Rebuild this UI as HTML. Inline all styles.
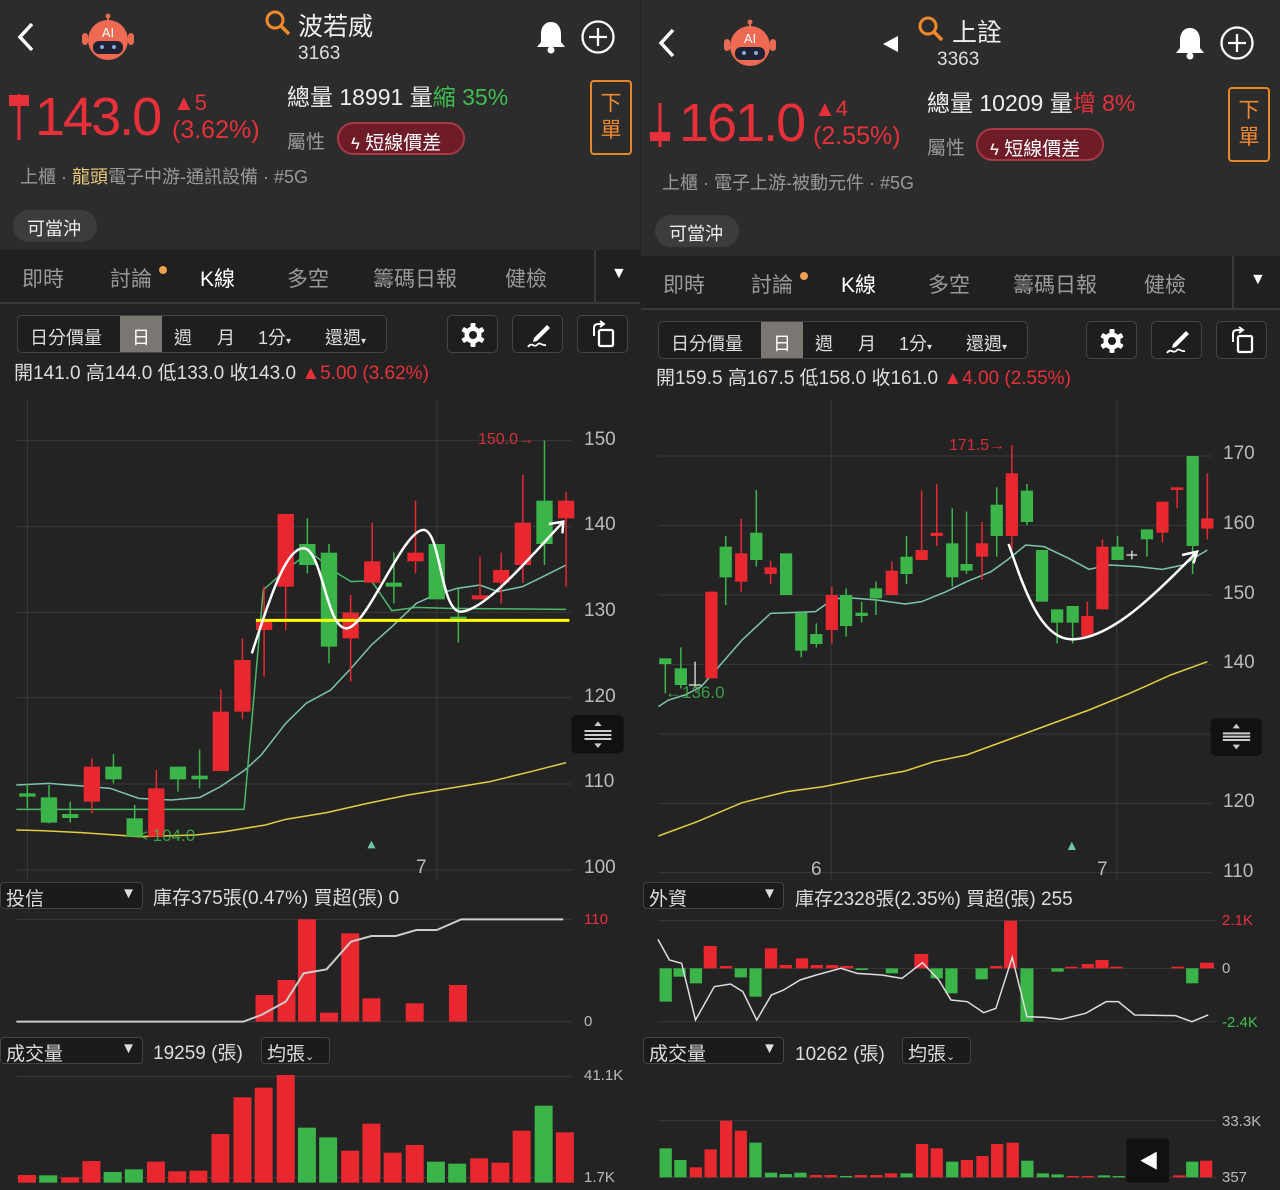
<!DOCTYPE html>
<html><head><meta charset="utf-8">
<style>
*{margin:0;padding:0;box-sizing:border-box}
body{width:1280px;height:1190px;background:#232323;position:relative;overflow:hidden;font-family:"Liberation Sans","Noto Sans CJK TC",sans-serif;color:#ddd}
.a{position:absolute;white-space:nowrap}
.p{position:absolute;top:0;width:640px;height:390px}
.hdr{position:absolute;left:0;top:0;width:640px;height:250px;background:#2c2c2c}
.tabs{position:absolute;left:0;top:250px;width:640px;height:54px;background:#202020;border-bottom:2px solid #3a3a3a}
.tabs span{position:absolute;top:13px;font-size:21px;color:#9a9a9a}
.seg{position:absolute;left:17px;top:315px;width:370px;height:38px;border:1px solid #444;border-radius:5px;background:#1e1e1e}
.seg span{position:absolute;top:8px;font-size:18px;color:#ddd}
.btn{position:absolute;top:315px;width:51px;height:38px;border:1px solid #444;border-radius:5px;background:#1e1e1e}
.red{color:#e8303a}.grn{color:#3fbf4f}
.ax{position:absolute;font-size:19px;color:#bbb}
.dd{position:absolute;height:27px;border:1px solid #444;border-radius:4px;background:#1b1b1b;font-size:19px;color:#ddd;padding:1px 5px}
</style></head><body>

<!-- LEFT HEADER -->
<div class="p" style="left:0">
<div class="hdr"></div>
<svg class="a" style="left:12px;top:20px" width="26" height="34"><path d="M20 4 L8 17 L20 30" stroke="#fff" stroke-width="3.5" fill="none"/></svg>
<svg class="a" style="left:80px;top:13px" width="56" height="48" viewBox="0 0 56 48"><line x1="28" y1="2" x2="28" y2="10" stroke="#e86a50" stroke-width="2"/><circle cx="28" cy="3" r="2.5" fill="#e86a50"/><rect x="2" y="20" width="6" height="12" rx="3" fill="#e86a50"/><rect x="48" y="20" width="6" height="12" rx="3" fill="#e86a50"/><circle cx="28" cy="27" r="20" fill="#ee6a52"/><rect x="13" y="28" width="30" height="13" rx="6" fill="#1f2233"/><circle cx="22" cy="34" r="2" fill="#8ad"/><circle cx="34" cy="34" r="2" fill="#8ad"/><text x="28" y="24" font-size="13" fill="#fff" text-anchor="middle" font-family="Liberation Sans">AI</text></svg>
<svg class="a" style="left:264px;top:9px" width="28" height="28"><circle cx="11" cy="11" r="8" stroke="#f0892a" stroke-width="3" fill="none"/><line x1="17" y1="17" x2="25" y2="25" stroke="#f0892a" stroke-width="3.5"/></svg>
<div class="a" style="left:298px;top:7px;font-size:25px;color:#eee">波若威</div>
<div class="a" style="left:298px;top:43px;font-size:19px;color:#ddd">3163</div>
<svg class="a" style="left:535px;top:20px" width="32" height="34" viewBox="0 0 32 34"><path d="M16 2 C9 2 6 8 6 14 L6 22 L2 27 L30 27 L26 22 L26 14 C26 8 23 2 16 2Z" fill="#fff"/><circle cx="16" cy="30" r="3.5" fill="#fff"/></svg>
<svg class="a" style="left:580px;top:19px" width="36" height="36"><circle cx="18" cy="18" r="15.5" stroke="#fff" stroke-width="2.3" fill="none"/><path d="M18 9V27M9 18H27" stroke="#fff" stroke-width="2.3"/></svg>
<svg class="a" style="left:8px;top:92px" width="24" height="50"><line x1="11" y1="2" x2="11" y2="48" stroke="#e8303a" stroke-width="3"/><rect x="1" y="3" width="20" height="11" fill="#e8303a"/></svg>
<div class="a red" style="left:35px;top:86px;font-size:54px;letter-spacing:-2px">143.0</div>
<div class="a red" style="left:173px;top:90px;font-size:22px">▲5</div>
<div class="a red" style="left:172px;top:116px;font-size:25px">(3.62%)</div>
<div class="a" style="left:287px;top:78px;font-size:23px;color:#eee">總量 18991 量<span class="grn">縮 35%</span></div>
<div class="a" style="left:287px;top:127px;font-size:19px;color:#999">屬性</div>
<div class="a" style="left:337px;top:122px;width:128px;height:33px;border:2px solid #a83a48;background:#6e1c28;border-radius:17px;font-size:19px;color:#fff;padding:4px 0 0 12px"><span style="font-size:17px">ϟ</span> 短線價差</div>
<div class="a" style="left:590px;top:80px;width:42px;height:75px;border:2px solid #e8862a;border-radius:4px;color:#f08a30;font-size:21px;line-height:27px;text-align:center;padding-top:8px;white-space:normal">下<br>單</div>
<div class="a" style="left:20px;top:163px;font-size:18px;color:#999">上櫃 · <span style="color:#e8c77a">龍頭</span>電子中游-通訊設備 · #5G</div>
<div class="a" style="left:13px;top:210px;width:84px;height:32px;border-radius:16px;background:#3c3c3c;font-size:18px;color:#eee;padding:5px 0 0 14px">可當沖</div>
<div class="tabs"><span style="left:22px">即時</span><span style="left:110px">討論</span><i class="a" style="left:159px;top:16px;width:8px;height:8px;border-radius:4px;background:#f0a050"></i><span style="left:200px;color:#fff">K線</span><span style="left:287px">多空</span><span style="left:373px">籌碼日報</span><span style="left:505px">健檢</span><i class="a" style="left:594px;top:0;width:2px;height:54px;background:#3a3a3a"></i><span style="left:611px;top:15px;font-size:16px;color:#fff">▼</span></div>
<div class="seg"><i class="a" style="left:102px;top:0;width:42px;height:36px;background:#7a7672"></i><span style="left:12px">日分價量</span><span style="left:114px;color:#fff">日</span><span style="left:156px">週</span><span style="left:199px">月</span><span style="left:240px">1分<small style="font-size:10px">▾</small></span><span style="left:307px">還週<small style="font-size:10px">▾</small></span></div>
<div class="btn" style="left:447px"><svg class="a" style="left:12px;top:6px" width="26" height="26" viewBox="0 0 26 26"><g fill="#fff"><circle cx="13" cy="13" r="8.5"/><rect x="10.5" y="1" width="5" height="24" rx="1"/><rect x="10.5" y="1" width="5" height="24" rx="1" transform="rotate(60 13 13)"/><rect x="10.5" y="1" width="5" height="24" rx="1" transform="rotate(120 13 13)"/></g><circle cx="13" cy="13" r="4" fill="#1e1e1e"/></svg></div>
<div class="btn" style="left:512px"><svg class="a" style="left:12px;top:6px" width="28" height="28"><path d="M22 3 L25 6 L12 19 L8 20 L9 16Z" fill="#fff"/><path d="M3 25 C7 19 9 27 13 22 C15 20 17 24 21 23" stroke="#fff" stroke-width="1.8" fill="none"/></svg></div>
<div class="btn" style="left:577px"><svg class="a" style="left:11px;top:4px" width="30" height="30"><rect x="10" y="10" width="14" height="16" rx="1.5" stroke="#fff" stroke-width="2.3" fill="none"/><path d="M5 16 V8 Q5 4 9 4 H13" stroke="#fff" stroke-width="2" fill="none"/><path d="M11 1 L15 4 L11 7" stroke="#fff" stroke-width="2" fill="none"/></svg></div>
<div class="a" style="left:14px;top:358px;font-size:19px;color:#ddd">開141.0 高144.0 低133.0 收143.0 <span class="red">▲5.00 (3.62%)</span></div>
</div>

<!-- RIGHT HEADER -->
<div class="p" style="left:641px;top:6px">
<div class="hdr" style="top:-6px;height:256px"></div>
<svg class="a" style="left:12px;top:20px" width="26" height="34"><path d="M20 4 L8 17 L20 30" stroke="#fff" stroke-width="3.5" fill="none"/></svg>
<svg class="a" style="left:81px;top:13px" width="56" height="48" viewBox="0 0 56 48"><line x1="28" y1="2" x2="28" y2="10" stroke="#e86a50" stroke-width="2"/><circle cx="28" cy="3" r="2.5" fill="#e86a50"/><rect x="2" y="20" width="6" height="12" rx="3" fill="#e86a50"/><rect x="48" y="20" width="6" height="12" rx="3" fill="#e86a50"/><circle cx="28" cy="27" r="20" fill="#ee6a52"/><rect x="13" y="28" width="30" height="13" rx="6" fill="#1f2233"/><circle cx="22" cy="34" r="2" fill="#8ad"/><circle cx="34" cy="34" r="2" fill="#8ad"/><text x="28" y="24" font-size="13" fill="#fff" text-anchor="middle" font-family="Liberation Sans">AI</text></svg>
<div class="a" style="left:242px;top:30px;width:0;height:0;border-top:8px solid transparent;border-bottom:8px solid transparent;border-right:15px solid #fff"></div>
<svg class="a" style="left:276px;top:9px" width="28" height="28"><circle cx="11" cy="11" r="8" stroke="#f0892a" stroke-width="3" fill="none"/><line x1="17" y1="17" x2="25" y2="25" stroke="#f0892a" stroke-width="3.5"/></svg>
<div class="a" style="left:311px;top:7px;font-size:25px;color:#eee">上詮</div>
<div class="a" style="left:296px;top:43px;font-size:19px;color:#ddd">3363</div>
<svg class="a" style="left:533px;top:20px" width="32" height="34" viewBox="0 0 32 34"><path d="M16 2 C9 2 6 8 6 14 L6 22 L2 27 L30 27 L26 22 L26 14 C26 8 23 2 16 2Z" fill="#fff"/><circle cx="16" cy="30" r="3.5" fill="#fff"/></svg>
<svg class="a" style="left:578px;top:19px" width="36" height="36"><circle cx="18" cy="18" r="15.5" stroke="#fff" stroke-width="2.3" fill="none"/><path d="M18 9V27M9 18H27" stroke="#fff" stroke-width="2.3"/></svg>
<svg class="a" style="left:8px;top:95px" width="24" height="50"><line x1="11" y1="2" x2="11" y2="46" stroke="#e8303a" stroke-width="3"/><rect x="1" y="31" width="20" height="9" fill="#e8303a"/></svg>
<div class="a red" style="left:38px;top:86px;font-size:54px;letter-spacing:-2px">161.0</div>
<div class="a red" style="left:173px;top:90px;font-size:22px">▲4</div>
<div class="a red" style="left:172px;top:116px;font-size:25px">(2.55%)</div>
<div class="a" style="left:286px;top:78px;font-size:23px;color:#eee">總量 10209 量<span class="red">增 8%</span></div>
<div class="a" style="left:286px;top:127px;font-size:19px;color:#999">屬性</div>
<div class="a" style="left:335px;top:122px;width:128px;height:33px;border:2px solid #a83a48;background:#6e1c28;border-radius:17px;font-size:19px;color:#fff;padding:4px 0 0 12px"><span style="font-size:17px">ϟ</span> 短線價差</div>
<div class="a" style="left:587px;top:81px;width:42px;height:75px;border:2px solid #e8862a;border-radius:4px;color:#f08a30;font-size:21px;line-height:27px;text-align:center;padding-top:8px;white-space:normal">下<br>單</div>
<div class="a" style="left:21px;top:163px;font-size:18px;color:#999">上櫃 · 電子上游-被動元件 · #5G</div>
<div class="a" style="left:14px;top:209px;width:84px;height:32px;border-radius:16px;background:#3c3c3c;font-size:18px;color:#eee;padding:5px 0 0 14px">可當沖</div>
<div class="tabs"><span style="left:22px">即時</span><span style="left:110px">討論</span><i class="a" style="left:159px;top:16px;width:8px;height:8px;border-radius:4px;background:#f0a050"></i><span style="left:200px;color:#fff">K線</span><span style="left:287px">多空</span><span style="left:372px">籌碼日報</span><span style="left:503px">健檢</span><i class="a" style="left:591px;top:0;width:2px;height:54px;background:#3a3a3a"></i><span style="left:609px;top:15px;font-size:16px;color:#fff">▼</span></div>
<div class="seg"><i class="a" style="left:102px;top:0;width:42px;height:36px;background:#7a7672"></i><span style="left:12px">日分價量</span><span style="left:114px;color:#fff">日</span><span style="left:156px">週</span><span style="left:199px">月</span><span style="left:240px">1分<small style="font-size:10px">▾</small></span><span style="left:307px">還週<small style="font-size:10px">▾</small></span></div>
<div class="btn" style="left:445px"><svg class="a" style="left:12px;top:6px" width="26" height="26" viewBox="0 0 26 26"><g fill="#fff"><circle cx="13" cy="13" r="8.5"/><rect x="10.5" y="1" width="5" height="24" rx="1"/><rect x="10.5" y="1" width="5" height="24" rx="1" transform="rotate(60 13 13)"/><rect x="10.5" y="1" width="5" height="24" rx="1" transform="rotate(120 13 13)"/></g><circle cx="13" cy="13" r="4" fill="#1e1e1e"/></svg></div>
<div class="btn" style="left:510px"><svg class="a" style="left:12px;top:6px" width="28" height="28"><path d="M22 3 L25 6 L12 19 L8 20 L9 16Z" fill="#fff"/><path d="M3 25 C7 19 9 27 13 22 C15 20 17 24 21 23" stroke="#fff" stroke-width="1.8" fill="none"/></svg></div>
<div class="btn" style="left:575px"><svg class="a" style="left:11px;top:4px" width="30" height="30"><rect x="10" y="10" width="14" height="16" rx="1.5" stroke="#fff" stroke-width="2.3" fill="none"/><path d="M5 16 V8 Q5 4 9 4 H13" stroke="#fff" stroke-width="2" fill="none"/><path d="M11 1 L15 4 L11 7" stroke="#fff" stroke-width="2" fill="none"/></svg></div>
<div class="a" style="left:15px;top:357px;font-size:19px;color:#ddd">開159.5 高167.5 低158.0 收161.0 <span class="red">▲4.00 (2.55%)</span></div>
</div>

<!-- LEFT CHART -->
<svg class="a" style="left:0;top:400px" width="640" height="480" viewBox="0 0 1568 1440" preserveAspectRatio="none">
<path vector-effect="non-scaling-stroke" stroke="#3a3a3a" stroke-width="1" d="M40 122H1400M40 380H1400M40 637H1400M40 893H1400M40 1152H1400M40 1410H1400M1070 0V1440M67 0V1440"/>
<g fill="none" stroke-width="1.5">
<path vector-effect="non-scaling-stroke" stroke="#e0cf40" d="M40 1290L100 1292L200 1298L340 1310L480 1305L550 1295L650 1275L700 1258L800 1238L900 1210L1000 1185L1100 1165L1200 1145L1300 1115L1387 1088"/>
<path vector-effect="non-scaling-stroke" stroke="#7fc4b0" d="M40 1155L120 1150L200 1158L270 1165L340 1195L420 1200L490 1192L540 1160L600 1110L640 1065L700 970L750 910L810 870L860 805L910 735L960 680L1020 610L1060 588L1120 565L1176 555L1220 575L1280 560L1330 530L1387 495"/>
<path vector-effect="non-scaling-stroke" stroke="#4cb86a" d="M40 1228L598 1228L645 570L700 510L760 455L820 515L860 545L910 542L960 632L1020 622L1100 625L1387 628"/>
</g>
<g stroke-width="1.5">
<path vector-effect="non-scaling-stroke" stroke="#3bb54a" d="M67 1150V1225M120 1155V1270M172 1205V1268M278 1062V1150M330 1215V1310M436 1100V1175M489 1048V1165M753 355V520M806 432V790M965 458V610M1070 432V598M1123 565V728M1334 122V495"/>
<path vector-effect="non-scaling-stroke" stroke="#e8272f" d="M225 1075V1240M383 1110V1310M541 868V1113M594 715V958M647 560V830M700 342V690M859 585V845M912 368V548M1018 302V520M1176 470V598M1228 458V610M1281 225V548M1387 275V560"/>
</g>
<g fill="#3bb54a"><rect x="47" y="1180" width="40" height="10"/><rect x="100" y="1192" width="40" height="76"/><rect x="152" y="1242" width="40" height="12"/><rect x="258" y="1100" width="40" height="38"/><rect x="310" y="1255" width="40" height="55"/><rect x="416" y="1100" width="40" height="38"/><rect x="469" y="1127" width="40" height="11"/><rect x="733" y="432" width="40" height="63"/><rect x="786" y="458" width="40" height="282"/><rect x="945" y="548" width="40" height="12"/><rect x="1050" y="432" width="40" height="166"/><rect x="1103" y="650" width="40" height="10"/><rect x="1314" y="302" width="40" height="130"/></g>
<g fill="#e8272f"><rect x="205" y="1100" width="40" height="105"/><rect x="363" y="1165" width="40" height="145"/><rect x="521" y="935" width="40" height="178"/><rect x="574" y="780" width="40" height="155"/><rect x="627" y="660" width="40" height="30"/><rect x="680" y="342" width="40" height="218"/><rect x="839" y="638" width="40" height="77"/><rect x="892" y="484" width="40" height="64"/><rect x="998" y="458" width="40" height="26"/><rect x="1156" y="586" width="40" height="12"/><rect x="1208" y="510" width="40" height="38"/><rect x="1261" y="368" width="40" height="127"/><rect x="1367" y="302" width="40" height="53"/></g>
<path vector-effect="non-scaling-stroke" stroke="#ffff00" stroke-width="3" d="M627 661H1395"/>
<path vector-effect="non-scaling-stroke" stroke="#fff" stroke-width="2.5" fill="none" d="M617 760C660 600 700 440 745 445C790 450 800 690 850 685C900 680 990 380 1040 390C1080 400 1080 640 1130 635C1190 630 1300 470 1380 365M1345 372L1380 365L1378 400"/>
<path d="M900 1345L910 1322L920 1345Z" fill="#6ec4a8"/>
<rect x="1400" y="945" width="128" height="115" rx="14" fill="#111"/>
<path vector-effect="non-scaling-stroke" stroke="#ccc" stroke-width="2" d="M1432 993H1498M1432 1005H1498M1432 1017H1498"/>
<path d="M1456 978L1465 964L1474 978ZM1456 1030L1465 1044L1474 1030Z" fill="#ccc"/>
</svg>
<div class="a red" style="left:478px;top:431px;font-size:16px;opacity:.9">150.0→</div>
<div class="a grn" style="left:138px;top:826px;font-size:17px;opacity:.8">&lt; 104.0</div>
<div class="ax" style="left:584px;top:429px">150</div><div class="ax" style="left:584px;top:514px">140</div><div class="ax" style="left:584px;top:600px">130</div><div class="ax" style="left:584px;top:686px">120</div><div class="ax" style="left:584px;top:771px">110</div><div class="ax" style="left:584px;top:857px">100</div>
<div class="ax" style="left:416px;top:857px">7</div>

<!-- RIGHT CHART -->
<svg class="a" style="left:640px;top:400px" width="640" height="480" viewBox="0 0 1568 1440" preserveAspectRatio="none">
<path vector-effect="non-scaling-stroke" stroke="#3a3a3a" stroke-width="1" d="M45 168H1400M45 376H1400M45 585H1400M45 793H1400M45 1002H1400M45 1210H1400M45 1418H1400M468 0V1440M1168 0V1440"/>
<g fill="none" stroke-width="1.5">
<path vector-effect="non-scaling-stroke" stroke="#e0cf40" d="M45 1308L140 1265L250 1208L360 1175L450 1160L550 1135L650 1113L720 1085L800 1065L900 1020L1000 975L1100 930L1200 880L1300 825L1390 785"/>
<path vector-effect="non-scaling-stroke" stroke="#7fc4b0" d="M45 920L70 900L110 885L150 860L200 790L250 720L320 640L430 635L470 600L500 592L580 600L650 612L690 605L750 575L800 545L860 515L900 480L945 435L990 440L1050 475L1100 508L1150 495L1220 500L1280 508L1330 495L1390 450"/>
</g>
<path vector-effect="non-scaling-stroke" stroke="#3bb54a" stroke-width="1.5" d="M62 775V880M100 742V865M210 408V615M285 270V500M358 460V585M395 638V772M432 670V742M505 565V710M543 605V668M578 545V645M653 408V552M765 325V560M800 335V522M874 262V470M948 252V376M985 450V605M1022 628V730M1060 618V730M1170 408V480M1242 388V470M1354 168V522"/>
<path vector-effect="non-scaling-stroke" stroke="#e8272f" stroke-width="1.5" d="M175 575V835M248 357V575M320 482V552M470 560V730M617 485V585M690 272V480M727 252V438M838 366V540M911 135V450M1096 605V712M1133 418V628M1280 305V428M1316 262V325M1390 220V418"/>
<path vector-effect="non-scaling-stroke" stroke="#ccc" stroke-width="1.5" d="M135 785V860M120 855H150M1192 465H1218M1205 452V478"/>
<g fill="#3bb54a"><rect x="47" y="775" width="30" height="17"/><rect x="85" y="805" width="30" height="50"/><rect x="195" y="440" width="30" height="92"/><rect x="270" y="398" width="30" height="82"/><rect x="343" y="460" width="30" height="125"/><rect x="380" y="638" width="30" height="114"/><rect x="417" y="702" width="30" height="30"/><rect x="490" y="585" width="30" height="93"/><rect x="528" y="638" width="30" height="10"/><rect x="563" y="565" width="30" height="30"/><rect x="638" y="470" width="30" height="52"/><rect x="750" y="430" width="30" height="102"/><rect x="785" y="492" width="30" height="20"/><rect x="859" y="314" width="30" height="94"/><rect x="933" y="272" width="30" height="94"/><rect x="970" y="450" width="30" height="155"/><rect x="1007" y="628" width="30" height="40"/><rect x="1045" y="618" width="30" height="50"/><rect x="1155" y="440" width="30" height="40"/><rect x="1227" y="388" width="30" height="30"/><rect x="1339" y="168" width="30" height="270"/></g>
<g fill="#e8272f"><rect x="160" y="575" width="30" height="260"/><rect x="233" y="460" width="30" height="85"/><rect x="305" y="502" width="30" height="20"/><rect x="455" y="585" width="30" height="105"/><rect x="602" y="512" width="30" height="73"/><rect x="675" y="450" width="30" height="30"/><rect x="712" y="398" width="30" height="10"/><rect x="823" y="430" width="30" height="40"/><rect x="896" y="220" width="30" height="188"/><rect x="1081" y="648" width="30" height="62"/><rect x="1118" y="440" width="30" height="188"/><rect x="1265" y="305" width="30" height="93"/><rect x="1301" y="262" width="30" height="8"/><rect x="1375" y="355" width="30" height="31"/></g>
<path vector-effect="non-scaling-stroke" stroke="#fff" stroke-width="2.5" fill="none" d="M903 432C940 560 980 720 1060 718C1150 715 1250 600 1365 455M1328 465L1365 455L1356 490"/>
<path d="M1048 1350L1058 1325L1068 1350Z" fill="#6ec4a8"/>
<rect x="1398" y="955" width="125" height="113" rx="14" fill="#111"/>
<path vector-effect="non-scaling-stroke" stroke="#ccc" stroke-width="2" d="M1428 1000H1495M1428 1010H1495M1428 1020H1495"/>
<path d="M1452 985L1461 971L1470 985ZM1452 1034L1461 1048L1470 1034Z" fill="#ccc"/>
</svg>
<div class="a red" style="left:949px;top:437px;font-size:16px;opacity:.9">171.5→</div>
<div class="a grn" style="left:665px;top:683px;font-size:17px;opacity:.8">←136.0</div>
<div class="ax" style="left:1223px;top:443px">170</div><div class="ax" style="left:1223px;top:513px">160</div><div class="ax" style="left:1223px;top:583px">150</div><div class="ax" style="left:1223px;top:652px">140</div><div class="ax" style="left:1223px;top:791px">120</div><div class="ax" style="left:1223px;top:861px">110</div>
<div class="ax" style="left:811px;top:859px">6</div><div class="ax" style="left:1097px;top:859px">7</div>

<!-- BOTTOM -->
<svg class="a" style="left:0;top:880px" width="1280" height="310" viewBox="0 0 1568 930" preserveAspectRatio="none">
<path vector-effect="non-scaling-stroke" stroke="#3a3a3a" stroke-width="1" d="M20 118H700M20 425H700M806 122H1490M806 265H1490M806 425H1490M20 590H700M20 893H700M806 722H1490M806 892H1490"/>
<g fill="#e8272f"><rect x="313" y="345" width="22" height="80"/><rect x="340" y="300" width="22" height="125"/><rect x="365" y="118" width="22" height="307"/><rect x="392" y="398" width="22" height="27"/><rect x="418" y="160" width="22" height="265"/><rect x="444" y="355" width="22" height="70"/><rect x="497" y="370" width="22" height="55"/><rect x="550" y="315" width="22" height="110"/></g>
<path vector-effect="non-scaling-stroke" stroke="#ccc" stroke-width="2" fill="none" d="M20 425L298 425L320 405L350 365L372 280L400 268L430 185L455 168L485 168L510 150L535 150L565 118L690 118"/>
<g fill="#3bb54a"><rect x="808" y="265" width="15" height="100"/><rect x="825" y="265" width="15" height="25"/><rect x="845" y="265" width="15" height="45"/><rect x="900" y="265" width="15" height="27"/><rect x="918" y="265" width="15" height="85"/><rect x="1048" y="265" width="15" height="5"/><rect x="1085" y="265" width="15" height="15"/><rect x="1140" y="265" width="15" height="30"/><rect x="1158" y="265" width="15" height="75"/><rect x="1195" y="265" width="15" height="33"/><rect x="1250" y="265" width="16" height="160"/><rect x="1288" y="265" width="15" height="10"/><rect x="1453" y="265" width="15" height="45"/></g>
<g fill="#e8272f"><rect x="862" y="198" width="16" height="67"/><rect x="882" y="258" width="15" height="7"/><rect x="937" y="205" width="15" height="60"/><rect x="955" y="255" width="15" height="10"/><rect x="975" y="235" width="15" height="30"/><rect x="993" y="255" width="15" height="10"/><rect x="1012" y="255" width="15" height="10"/><rect x="1030" y="258" width="15" height="7"/><rect x="1120" y="222" width="17" height="43"/><rect x="1213" y="258" width="15" height="7"/><rect x="1230" y="122" width="16" height="143"/><rect x="1305" y="260" width="15" height="5"/><rect x="1325" y="252" width="15" height="13"/><rect x="1342" y="240" width="16" height="25"/><rect x="1360" y="260" width="15" height="5"/><rect x="1435" y="260" width="15" height="5"/><rect x="1470" y="248" width="17" height="17"/></g>
<path vector-effect="non-scaling-stroke" stroke="#ddd" stroke-width="1.5" fill="none" d="M806 178L820 240L835 250L852 420L875 320L895 312L910 335L927 420L945 345L960 330L980 300L1000 285L1030 265L1050 280L1080 285L1105 295L1130 248L1150 300L1165 360L1185 365L1205 398L1220 385L1240 232L1258 410L1280 412L1300 418L1330 400L1355 365L1370 365L1390 405L1440 407L1460 425L1480 405"/>
<g fill="#e8272f"><rect x="22" y="885" width="22" height="23"/><rect x="75" y="892" width="22" height="16"/><rect x="101" y="843" width="22" height="65"/><rect x="180" y="845" width="22" height="63"/><rect x="206" y="874" width="22" height="34"/><rect x="232" y="872" width="22" height="36"/><rect x="259" y="762" width="22" height="146"/><rect x="286" y="652" width="22" height="256"/><rect x="312" y="623" width="22" height="285"/><rect x="339" y="585" width="22" height="323"/><rect x="418" y="812" width="22" height="96"/><rect x="444" y="731" width="22" height="177"/><rect x="470" y="818" width="22" height="90"/><rect x="497" y="795" width="22" height="113"/><rect x="576" y="835" width="22" height="73"/><rect x="602" y="848" width="22" height="60"/><rect x="628" y="752" width="22" height="156"/><rect x="681" y="757" width="22" height="151"/></g>
<g fill="#3bb54a"><rect x="48" y="886" width="22" height="22"/><rect x="127" y="876" width="22" height="32"/><rect x="153" y="868" width="22" height="40"/><rect x="365" y="743" width="22" height="165"/><rect x="391" y="772" width="22" height="136"/><rect x="523" y="845" width="22" height="63"/><rect x="549" y="851" width="22" height="57"/><rect x="655" y="677" width="22" height="231"/></g>
<g fill="#3bb54a"><rect x="808" y="805" width="15" height="87"/><rect x="826" y="840" width="15" height="52"/><rect x="918" y="788" width="15" height="104"/><rect x="937" y="878" width="15" height="14"/><rect x="955" y="882" width="15" height="10"/><rect x="973" y="878" width="15" height="14"/><rect x="1029" y="888" width="15" height="4"/><rect x="1103" y="880" width="15" height="12"/><rect x="1159" y="845" width="15" height="47"/><rect x="1251" y="842" width="15" height="50"/><rect x="1270" y="880" width="15" height="12"/><rect x="1288" y="883" width="15" height="9"/><rect x="1345" y="886" width="15" height="6"/><rect x="1363" y="888" width="15" height="4"/><rect x="1453" y="845" width="15" height="47"/></g>
<g fill="#e8272f"><rect x="845" y="862" width="15" height="30"/><rect x="863" y="808" width="15" height="84"/><rect x="882" y="722" width="15" height="170"/><rect x="900" y="752" width="15" height="140"/><rect x="992" y="885" width="15" height="7"/><rect x="1010" y="885" width="15" height="7"/><rect x="1047" y="885" width="15" height="7"/><rect x="1066" y="885" width="15" height="7"/><rect x="1084" y="880" width="15" height="12"/><rect x="1122" y="792" width="15" height="100"/><rect x="1140" y="805" width="15" height="87"/><rect x="1177" y="840" width="15" height="52"/><rect x="1196" y="828" width="15" height="64"/><rect x="1214" y="792" width="15" height="100"/><rect x="1233" y="788" width="15" height="104"/><rect x="1307" y="888" width="15" height="4"/><rect x="1325" y="888" width="15" height="4"/><rect x="1437" y="886" width="15" height="6"/><rect x="1470" y="842" width="15" height="50"/></g>
<rect x="1380" y="775" width="52" height="133" rx="6" fill="#111"/>
<path d="M1417 815L1397 842L1417 869Z" fill="#fff"/>
</svg>
<div class="dd" style="left:0;top:882px;width:143px">投信<span style="position:absolute;right:6px;top:2px;font-size:15px">▼</span></div>
<div class="a" style="left:153px;top:883px;font-size:19px;color:#ddd">庫存375張(0.47%) 買超(張) 0</div>
<div class="a red" style="left:584px;top:911px;font-size:15px">110</div>
<div class="a" style="left:584px;top:1013px;font-size:15px;color:#bbb">0</div>
<div class="dd" style="left:643px;top:882px;width:141px">外資<span style="position:absolute;right:6px;top:2px;font-size:15px">▼</span></div>
<div class="a" style="left:795px;top:884px;font-size:19px;color:#ddd">庫存2328張(2.35%) 買超(張) 255</div>
<div class="a red" style="left:1222px;top:912px;font-size:15px">2.1K</div>
<div class="a" style="left:1222px;top:960px;font-size:15px;color:#bbb">0</div>
<div class="a grn" style="left:1222px;top:1014px;font-size:15px">-2.4K</div>
<div class="dd" style="left:0;top:1037px;width:143px">成交量<span style="position:absolute;right:6px;top:2px;font-size:15px">▼</span></div>
<div class="a" style="left:153px;top:1038px;font-size:19px;color:#ddd">19259 (張)</div>
<div class="dd" style="left:261px;top:1037px;width:69px">均張<small style="font-size:11px">⌄</small></div>
<div class="a" style="left:584px;top:1067px;font-size:15px;color:#bbb">41.1K</div>
<div class="a" style="left:584px;top:1169px;font-size:15px;color:#bbb">1.7K</div>
<div class="dd" style="left:643px;top:1037px;width:141px">成交量<span style="position:absolute;right:6px;top:2px;font-size:15px">▼</span></div>
<div class="a" style="left:795px;top:1039px;font-size:19px;color:#ddd">10262 (張)</div>
<div class="dd" style="left:902px;top:1037px;width:69px">均張<small style="font-size:11px">⌄</small></div>
<div class="a" style="left:1222px;top:1113px;font-size:15px;color:#bbb">33.3K</div>
<div class="a" style="left:1222px;top:1169px;font-size:15px;color:#bbb">357</div>
</body></html>
